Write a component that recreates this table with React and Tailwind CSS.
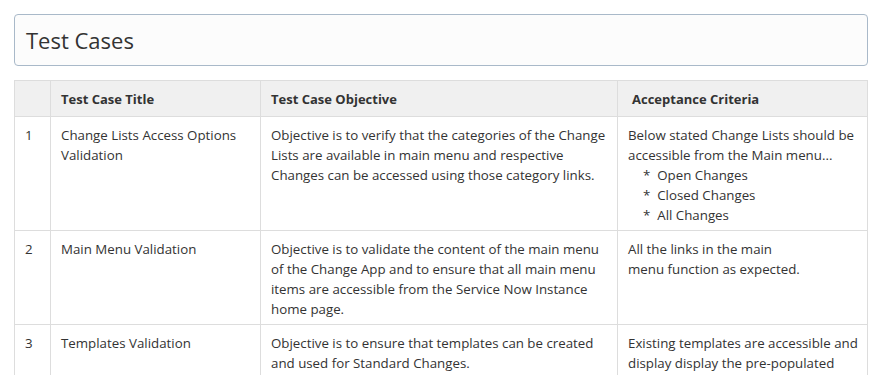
const rows = [
  {
    id: "1",
    title: ["Change Lists Access Options", "Validation"],
    objective: [
      "Objective is to verify that the categories of the Change",
      "Lists are available in main menu and respective",
      "Changes can be accessed using those category links.",
    ],
    criteria: [
      "Below stated Change Lists should be",
      "accessible from the Main menu...",
    ],
    bullets: ["Open Changes", "Closed Changes", "All Changes"],
  },
  {
    id: "2",
    title: ["Main Menu Validation"],
    objective: [
      "Objective is to validate the content of the main menu",
      "of the Change App and to ensure that all main menu",
      "items are accessible from the Service Now Instance",
      "home page.",
    ],
    criteria: ["All the links in the main", "menu function as expected."],
    bullets: [],
  },
  {
    id: "3",
    title: ["Templates Validation"],
    objective: [
      "Objective is to ensure that templates can be created",
      "and used for Standard Changes.",
    ],
    criteria: [
      "Existing templates are accessible and",
      "display display the pre-populated",
    ],
    bullets: [],
  },
];

function Lines({ lines }) {
  return lines.map((l, i) => (
    <span key={i} className="block whitespace-nowrap">
      {l}
    </span>
  ));
}

export default function App() {
  return (
    <div className="min-h-screen bg-white pl-[14px] pr-[12px] pt-[14px] text-[#333] font-['Open_Sans',sans-serif]">
      {/* Title */}
      <div className="h-[52px] rounded-[4px] border border-[#a9b9c9] bg-[#fcfcfc] px-[11px] flex items-center">
        <h1 className="text-[22px] leading-none text-[#333]">Test Cases</h1>
      </div>

      {/* Table */}
      <table className="mt-[14px] w-full border-collapse table-fixed text-[13.3px] leading-[20px]">
        <colgroup>
          <col className="w-[36px]" />
          <col className="w-[210px]" />
          <col className="w-[357px]" />
          <col />
        </colgroup>
        <thead>
          <tr className="bg-[#f0f0f0]">
            <th className="border border-[#dddddd] h-[36px] px-[10px]"></th>
            <th className="border border-[#dddddd] h-[36px] px-[10px] text-left font-bold text-[13px]">Test Case Title</th>
            <th className="border border-[#dddddd] h-[36px] px-[10px] text-left font-bold text-[13px]">Test Case Objective</th>
            <th className="border border-[#dddddd] h-[36px] pl-[14px] pr-[10px] text-left font-bold text-[13px]">Acceptance Criteria</th>
          </tr>
        </thead>
        <tbody>
          {rows.map((r) => (
            <tr key={r.id} className="align-top">
              <td className="border border-[#dddddd] pl-[10px] pr-[6px] pt-[8px] pb-[5px]">{r.id}</td>
              <td className="border border-[#dddddd] px-[10px] pt-[8px] pb-[5px]">
                <Lines lines={r.title} />
              </td>
              <td className="border border-[#dddddd] px-[10px] pt-[8px] pb-[5px]">
                <Lines lines={r.objective} />
              </td>
              <td className="border border-[#dddddd] px-[10px] pt-[8px] pb-[5px]">
                <Lines lines={r.criteria} />
                {r.bullets.map((b) => (
                  <span key={b} className="block whitespace-nowrap pl-[15px]">
                    *&nbsp; {b}
                  </span>
                ))}
              </td>
            </tr>
          ))}
        </tbody>
      </table>
    </div>
  );
}
